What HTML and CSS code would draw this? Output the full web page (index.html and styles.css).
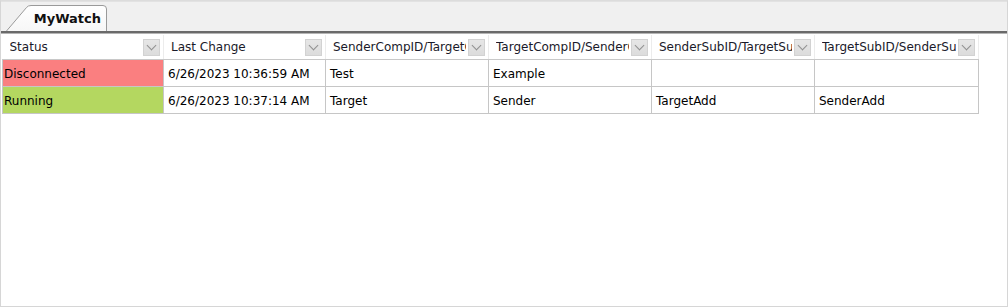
FILE: index.html
```html
<!DOCTYPE html>
<html>
<head>
<meta charset="utf-8">
<link rel="stylesheet" href="styles.css">
</head>
<body>
<div class="frame">
  <div class="tabbar">
    <div class="tab">
      <svg class="tab-shape" width="102" height="28" viewBox="0 0 102 28">
        <defs>
          <linearGradient id="tg" x1="0" y1="0" x2="0" y2="1">
            <stop offset="0" stop-color="#ffffff"/>
            <stop offset="1" stop-color="#f7f7f7"/>
          </linearGradient>
        </defs>
        <path d="M0.5 28 L20.5 4.5 Q22 2.5 25 2.5 L97 2.5 Q100.5 2.5 100.5 6 L100.5 28" fill="url(#tg)" stroke="#9a9a9a" stroke-width="1"/>
      </svg>
      <span class="tab-label">MyWatch</span>
    </div>
  </div>
  <div class="rule"></div>
  <table class="grid">
    <colgroup>
      <col class="c1"><col class="c2"><col class="c3"><col class="c4"><col class="c5"><col class="c6">
    </colgroup>
    <thead>
      <tr>
        <th><div class="hcell"><span class="htext">Status</span><span class="dd"></span></div></th>
        <th><div class="hcell"><span class="htext">Last Change</span><span class="dd"></span></div></th>
        <th><div class="hcell"><span class="htext">SenderCompID/TargetCompID</span><span class="dd"></span></div></th>
        <th><div class="hcell"><span class="htext">TargetCompID/SenderCompID</span><span class="dd"></span></div></th>
        <th><div class="hcell"><span class="htext">SenderSubID/TargetSubID</span><span class="dd"></span></div></th>
        <th><div class="hcell"><span class="htext">TargetSubID/SenderSubID</span><span class="dd"></span></div></th>
      </tr>
    </thead>
    <tbody>
      <tr>
        <td class="status bad">Disconnected</td>
        <td>6/26/2023 10:36:59 AM</td>
        <td>Test</td>
        <td>Example</td>
        <td></td>
        <td></td>
      </tr>
      <tr>
        <td class="status ok">Running</td>
        <td>6/26/2023 10:37:14 AM</td>
        <td>Target</td>
        <td>Sender</td>
        <td>TargetAdd</td>
        <td>SenderAdd</td>
      </tr>
    </tbody>
  </table>
</div>
</body>
</html>
```

FILE: styles.css
```css
html, body {
  margin: 0;
  padding: 0;
  background: #ffffff;
}
body {
  font-family: "DejaVu Sans", Verdana, sans-serif;
  font-size: 12px;
  color: #000;
}
.frame {
  box-sizing: border-box;
  width: 1008px;
  height: 307px;
  border: 1px solid #d6d6d6;
  border-top-color: #dcdcdc;
  background: #ffffff;
}
.tabbar {
  height: 30px;
  background: #f0f0f0;
  border-top: 1px solid #e2e2e2;
  box-sizing: border-box;
  display: flex;
  align-items: flex-end;
  padding-left: 5px;
}
.tab {
  position: relative;
  width: 102px;
  height: 28px;
  display: flex;
  align-items: center;
  justify-content: flex-end;
  padding-right: 7px;
  box-sizing: border-box;
}
.tab-shape {
  position: absolute;
  left: 0;
  top: 0;
}
.tab-label {
  position: relative;
  font-weight: bold;
  font-size: 13px;
  color: #111;
  padding-top: 2px;
}
.rule {
  height: 2px;
  background: #6a6a6a;
  border-bottom: 1px solid #b4b4b4;
  margin-bottom: 1px;
}
.grid {
  border-collapse: collapse;
  table-layout: fixed;
  width: 976px;
  margin-left: 1px;
}
.c1 { width: 161px; }
.c2 { width: 162px; }
.c3 { width: 163px; }
.c4 { width: 163px; }
.c5 { width: 163px; }
.c6 { width: 164px; }
th {
  padding: 0;
  height: 24px;
  font-weight: normal;
  text-align: left;
  border-right: 1px solid #ececec;
  border-bottom: 1px solid #c8c8c8;
}
.hcell {
  display: flex;
  align-items: center;
  gap: 2px;
  padding: 0 3px 0 7px;
  height: 24px;
}
.htext {
  flex: 1;
  overflow: hidden;
  white-space: nowrap;
  color: #1a1a2a;
}
.dd {
  flex: none;
  width: 15px;
  height: 15px;
  border: 1px solid #d2d2d2;
  background: linear-gradient(#e6e6e6, #dcdcdc);
  position: relative;
}
.dd::after {
  content: "";
  position: absolute;
  width: 6px;
  height: 6px;
  border-right: 1px solid #909090;
  border-bottom: 1px solid #909090;
  transform: rotate(45deg);
  top: 2px;
  left: 4px;
}
td {
  height: 25px;
  padding: 1px 4px 0 4px;
  border: 1px solid #c6c6c6;
  white-space: nowrap;
  overflow: hidden;
}
td.status {
  padding-left: 1px;
}
td.bad { background: #fa7f80; }
td.ok { background: #b4d760; }
```
